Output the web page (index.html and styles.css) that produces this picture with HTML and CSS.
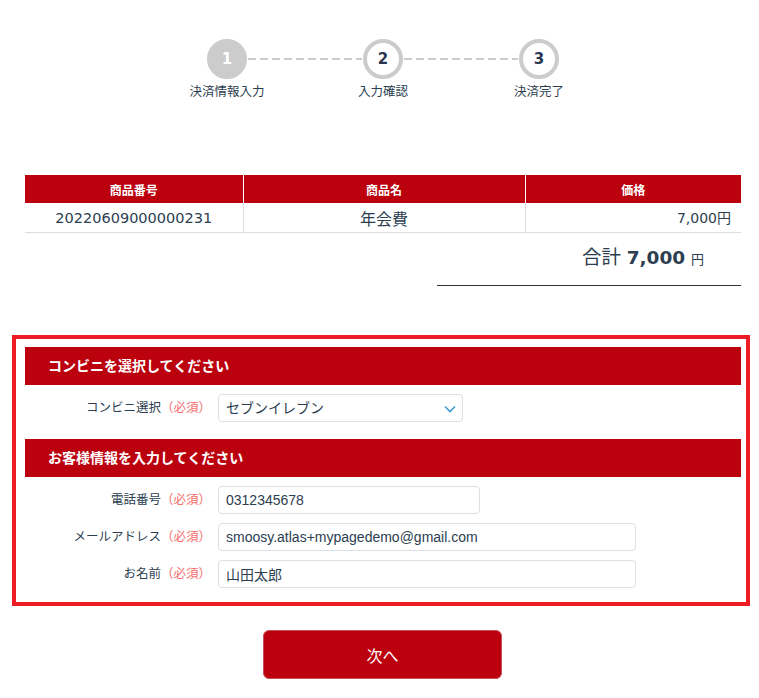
FILE: index.html
```html
<!DOCTYPE html>
<html lang="ja">
<head>
    <meta charset="UTF-8">
    <meta name="viewport" content="width=device-width, initial-scale=1.0">
    <title>決済情報入力</title>
    <link rel="stylesheet" href="styles.css">
</head>
<body>
<div class="steps">
    <div class="step-circle active">1</div>
    <div class="step-line"></div>
    <div class="step-circle">2</div>
    <div class="step-line"></div>
    <div class="step-circle">3</div>
    <div class="step-label">決済情報入力</div>
    <div class="step-label">入力確認</div>
    <div class="step-label">決済完了</div>
</div>

<div class="order">
    <table>
        <colgroup>
            <col class="col-no">
            <col class="col-name">
            <col class="col-price">
        </colgroup>
        <thead>
            <tr>
                <th>商品番号</th>
                <th>商品名</th>
                <th>価格</th>
            </tr>
        </thead>
        <tbody>
            <tr>
                <td class="c-no">20220609000000231</td>
                <td class="c-name">年会費</td>
                <td class="c-price">7,000円</td>
            </tr>
        </tbody>
    </table>
    <div class="total"><span class="sum">合計</span> <b>7,000</b> <span class="yen">円</span></div>
</div>

<div class="form-box">
    <h2 class="section-title">コンビニを選択してください</h2>
    <div class="form-row">
        <label for="store">コンビニ選択<span class="req">（必須）</span></label>
        <div class="select-wrap">
            <select id="store">
                <option>セブンイレブン</option>
            </select>
            <svg class="chevron" width="12" height="8" viewBox="0 0 12 8"><path d="M1 1.5 L6 6.5 L11 1.5" fill="none" stroke="#3d9ad6" stroke-width="1.6"/></svg>
        </div>
    </div>

    <h2 class="section-title second">お客様情報を入力してください</h2>
    <div class="form-row">
        <label for="tel">電話番号<span class="req">（必須）</span></label>
        <input type="text" id="tel" class="short" value="0312345678">
    </div>
    <div class="form-row">
        <label for="mail">メールアドレス<span class="req">（必須）</span></label>
        <input type="text" id="mail" class="long" value="smoosy.atlas+mypagedemo@gmail.com">
    </div>
    <div class="form-row">
        <label for="name">お名前<span class="req">（必須）</span></label>
        <input type="text" id="name" class="long" value="山田太郎">
    </div>
</div>

<div class="actions">
    <button type="button">次へ</button>
</div>
</body>
</html>
```

FILE: styles.css
```css
body {
    margin: 0;
    font-family: "DejaVu Sans", "Noto Sans CJK JP", sans-serif;
    color: #2c3e50;
    background: #fff;
}
.steps {
    display: grid;
    grid-template-columns: 40px 116px 40px 116px 40px;
    grid-template-rows: 40px auto;
    row-gap: 4px;
    justify-content: center;
    padding: 39px 0 0 7px;
}
.step-circle {
    box-sizing: border-box;
    width: 40px;
    height: 40px;
    border: 4px solid #cccccc;
    border-radius: 50%;
    background: #fff;
    color: #2a3552;
    font-weight: bold;
    font-size: 15px;
    line-height: 32px;
    text-align: center;
}
.step-circle.active {
    background: #cccccc;
    color: #fff;
}
.step-line {
    align-self: center;
    height: 2px;
    margin: 0 1px;
    background: repeating-linear-gradient(90deg, #cccccc 0 8px, transparent 8px 12px);
}
.step-label {
    justify-self: center;
    white-space: nowrap;
    font-size: 12.5px;
    line-height: 18px;
    color: #2c3e50;
}
.step-label:nth-child(6) { grid-column: 1; }
.step-label:nth-child(7) { grid-column: 3; }
.step-label:nth-child(8) { grid-column: 5; }

.order {
    margin: 74px 18px 0 25px;
}
table {
    width: 100%;
    border-collapse: collapse;
    table-layout: fixed;
}
.col-no { width: 218px; }
.col-name { width: 282px; }
.col-price { width: 216px; }
th {
    height: 28px;
    padding: 0;
    background: #bb000e;
    color: #fff;
    font-size: 12px;
    font-weight: bold;
    border-right: 1px solid #fff;
}
th:last-child { border-right: none; }
td {
    height: 29px;
    padding: 0;
    border-bottom: 1px solid #dddddd;
    border-right: 1px solid #dddddd;
    font-size: 14px;
    line-height: 20px;
}
td:last-child { border-right: none; }
.c-no { text-align: center; font-size: 14.5px; }
.c-name { text-align: center; font-size: 16px; height: 25px; padding-top: 4px; }
.c-price { text-align: right; padding-right: 10px; }
.total {
    width: 304px;
    margin-left: auto;
    padding: 13px 37px 13px 0;
    box-sizing: border-box;
    border-bottom: 1px solid #333;
    text-align: right;
    font-size: 18px;
    line-height: 24px;
}
.total .sum { font-size: 19.5px; }
.total b { font-size: 18.5px; }
.total .yen { font-size: 13px; }

.form-box {
    margin: 49px 9px 0 12px;
    padding: 8px 5px 14px 9px;
    border: 4px solid #ee1c25;
}
.section-title {
    margin: 0;
    height: 38px;
    padding-left: 23px;
    background: #bb000e;
    color: #fff;
    font-size: 14px;
    font-weight: bold;
    line-height: 38px;
}
.section-title.second {
    margin-top: 17px;
    margin-bottom: 9px;
}
.form-row {
    display: grid;
    grid-template-columns: 186px auto;
    column-gap: 7px;
    align-items: center;
    justify-content: start;
    margin-top: 9px;
}
.section-title.second + .form-row { margin-top: 0; }
.form-row label {
    text-align: right;
    font-size: 12.5px;
    line-height: 16px;
    color: #2c3e50;
}
.req { color: #f56c6c; }
.select-wrap {
    position: relative;
    width: 245px;
}
select, input {
    box-sizing: border-box;
    height: 28px;
    border: 1px solid #dcdfe6;
    border-radius: 4px;
    background: #fff;
    color: #2c3e50;
    font-family: "Liberation Sans", "Noto Sans CJK JP", sans-serif;
    font-size: 14px;
    padding: 0 7px;
}
select {
    width: 100%;
    appearance: none;
}
.chevron {
    position: absolute;
    right: 7px;
    top: 11px;
    pointer-events: none;
}
input.short { width: 262px; }
input.long { width: 418px; }

.actions {
    display: flex;
    justify-content: center;
    margin: 24px 0 0 6px;
}
button {
    width: 239px;
    height: 49px;
    border: 1px solid #c5505a;
    border-radius: 6px;
    background: #bb000e;
    color: #fff;
    font-family: "Noto Sans CJK JP", sans-serif;
    font-size: 16px;
    cursor: pointer;
}
```
